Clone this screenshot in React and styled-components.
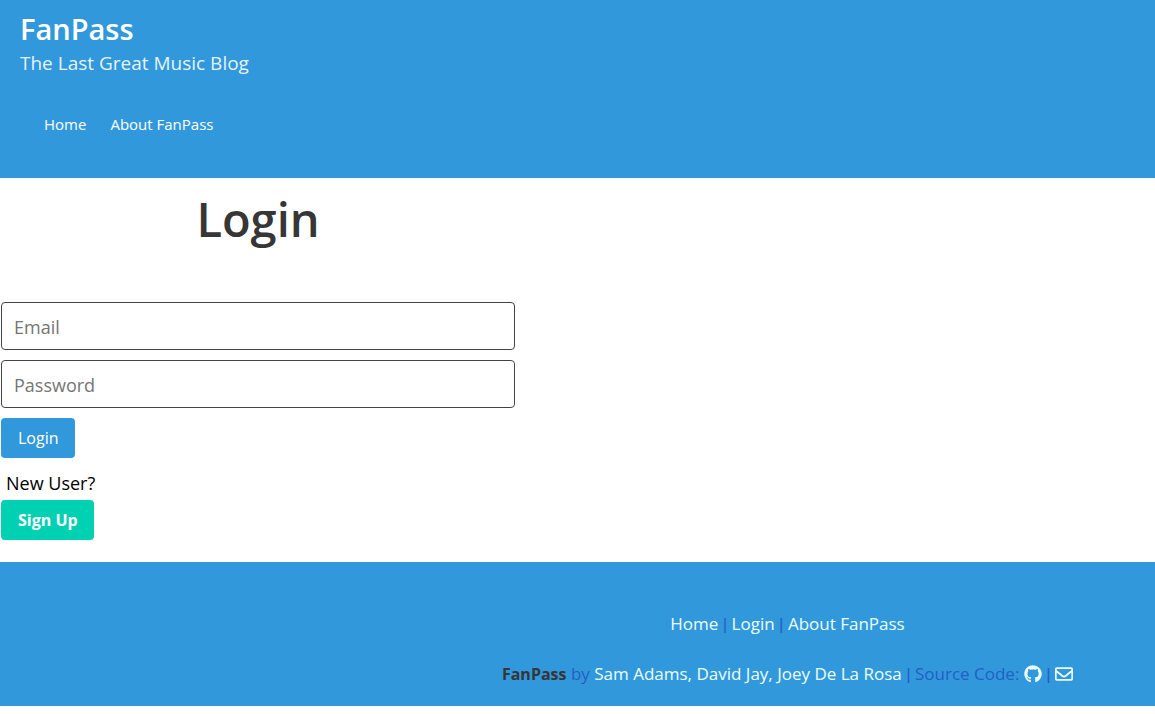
import React from "react";
import styled, { createGlobalStyle } from "styled-components";
import { FaGithub, FaRegEnvelope } from "react-icons/fa";

const GlobalStyle = createGlobalStyle`
  *, *::before, *::after { box-sizing: border-box; }
  body {
    margin: 0;
    background: #fff;
    color: #000;
    font-family: "Segoe UI", "Open Sans", "Noto Sans", sans-serif;
    font-size: 18px;
    line-height: 24px;
  }
  h1, h2, p { margin: 0; }
`;

const Header = styled.header`
  padding: 10px 20px 28px;
  background: #3298dc;
  color: #fff;
`;

const Brand = styled.h1`
  font-size: 29px;
  font-weight: 600;
  line-height: 38px;
`;

const Tagline = styled.p`
  color: rgba(255, 255, 255, 0.9);
  font-size: 19px;
  line-height: 30px;
`;

const Nav = styled.nav`
  display: flex;
  gap: 24px;
  padding: 32px 24px 12px;
  font-size: 15px;
  line-height: 28px;
`;

const Link = styled.a`
  color: ${({ $color }) => $color || "#fff"};
  text-decoration: none;
`;

const Main = styled.main`
  padding: 13px 0 22px 1px;
`;

const LoginForm = styled.form`
  display: flex;
  flex-direction: column;
  align-items: flex-start;
  gap: 10px;
  width: 514px;
  max-width: 100%;
`;

const Title = styled.h2`
  align-self: center;
  margin-bottom: 45px;
  color: #363636;
  font-size: 47px;
  font-weight: 600;
  line-height: 56px;
`;

const Field = styled.input`
  width: 100%;
  height: 48px;
  padding: 2px 12px 0;
  border: 1px solid #434343;
  border-radius: 4px;
  background: #fff;
  color: #363636;
  font: inherit;

  &::placeholder {
    color: #757575;
    opacity: 1;
  }
`;

const Button = styled.button`
  height: 40px;
  padding: 0 15px 0 16px;
  border: 1px solid transparent;
  border-radius: 4px;
  background: ${({ $background }) => $background};
  color: #fff;
  font-family: inherit;
  font-size: 16px;
  font-weight: ${({ $bold }) => ($bold ? 700 : 400)};
  line-height: 24px;
`;

const SignUp = styled.section`
  padding-top: 10px;
`;

const Prompt = styled.p`
  padding: 0 5px 2px;
  line-height: 30px;
`;

const Footer = styled.footer`
  display: flex;
  flex-direction: column;
  gap: 26px;
  padding: 50px 0 20px 420px;
  background: #3298dc;
  color: #2160c4;
  font-size: 17px;
  text-align: center;

  svg {
    display: inline-block;
    font-size: 18px;
    vertical-align: -3px;
  }

  @media (max-width: 900px) {
    padding-left: 0;
  }
`;

const SiteName = styled.strong`
  color: #363636;
  font-size: 16px;
  line-height: 1;
`;

const Separator = styled.span`
  font-family: "Liberation Sans", Arial, sans-serif;
  line-height: 1;
`;

const pale = "#ebfffc";

export default function App() {
  return (
    <>
      <GlobalStyle />
      <Header>
        <Brand>FanPass</Brand>
        <Tagline>The Last Great Music Blog</Tagline>
        <Nav>
          <Link href="#home">Home</Link>
          <Link href="#about">About FanPass</Link>
        </Nav>
      </Header>
      <Main>
        <LoginForm onSubmit={(event) => event.preventDefault()}>
          <Title>Login</Title>
          <Field type="email" placeholder="Email" aria-label="Email" />
          <Field type="password" placeholder="Password" aria-label="Password" />
          <Button type="submit" $background="#3298dc">Login</Button>
        </LoginForm>
        <SignUp>
          <Prompt>New User?</Prompt>
          <Button type="button" $background="#00d1b2" $bold>Sign Up</Button>
        </SignUp>
      </Main>
      <Footer>
        <p>
          <Link href="#home" $color={pale}>Home</Link> <Separator>|</Separator>{" "}
          <Link href="#login" $color={pale}>Login</Link> <Separator>|</Separator>{" "}
          <Link href="#about" $color={pale}>About FanPass</Link>
        </p>
        <p>
          <SiteName>FanPass</SiteName> by{" "}
          <Link href="#authors" $color={pale}>Sam Adams, David Jay, Joey De La Rosa</Link>{" "}
          <Separator>|</Separator> Source Code:{" "}
          <Link href="#source" $color={pale} aria-label="GitHub"><FaGithub /></Link>{" "}
          <Separator>|</Separator>{" "}
          <Link href="#contact" $color={pale} aria-label="Email us"><FaRegEnvelope /></Link>
        </p>
      </Footer>
    </>
  );
}
